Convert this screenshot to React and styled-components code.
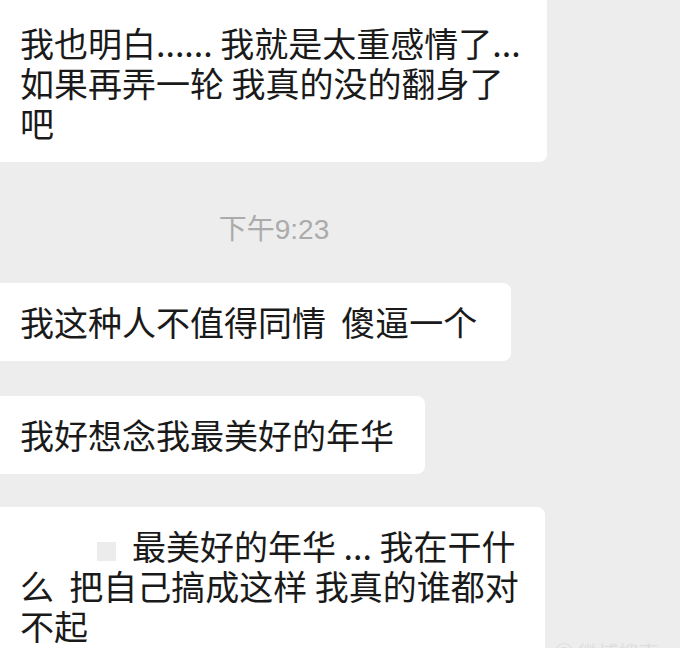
import React from "react"
import styled, { createGlobalStyle } from "styled-components"

const GlobalStyle = createGlobalStyle`
  html, body {
    margin: 0;
    padding: 0;
    background: #ededed;
    overflow: hidden;
  }
  body {
    font-family: "Noto Sans CJK SC", "Noto Sans", sans-serif;
  }
`

const Chat = styled.div`
  /* =-=-=-=-= Default =-=-=-=-= */
  position: relative;
  width: 680px;
  height: 648px;
  overflow: hidden;
  display: flex;
  flex-direction: column;
  align-items: flex-start;
  /* =-=-=-=-=-=-=-=-=-=-=-=-=-= */
`

const Bubble = styled.div`
  box-sizing: border-box;
  width: ${(p) => p.$w}px;
  margin-top: ${(p) => p.$gap}px;
  padding: ${(p) => (p.$first ? 23 : 19)}px 20px 19px 20px;
  background: #ffffff;
  border-radius: ${(p) => (p.$first ? "0 0 8px 0" : "0 8px 8px 0")};
  color: #1a1a1a;
  font-size: 34px;
  line-height: 40px;
  white-space: nowrap;
  flex-shrink: 0;
`

const Line = styled.div`
  display: block;
`

const Stamp = styled.div`
  width: 548px;
  margin-top: 49px;
  text-align: center;
  color: #ababab;
  font-family: "Liberation Sans", "Noto Sans CJK SC", sans-serif;
  font-size: 28px;
  line-height: 37px;
`

const Placeholder = styled.span`
  display: inline-block;
  width: 19px;
  height: 19px;
  margin: 0 16px 0 77px;
  background: #ececec;
  vertical-align: -1px;
`

const Watermark = styled.div`
  position: absolute;
  left: 554px;
  top: 641px;
  color: #dedede;
  font-size: 20px;
  line-height: 24px;
  white-space: nowrap;
`

const App = () => {
  return (
    <>
      <GlobalStyle />
      <Chat>
        <Bubble $first $w={547} $gap={0}>
          <Line>我也明白...... 我就是太重感情了...</Line>
          <Line>如果再弄一轮 我真的没的翻身了</Line>
          <Line>吧</Line>
        </Bubble>

        <Stamp>下午9:23</Stamp>

        <Bubble $w={511} $gap={35}>
          <Line>我这种人不值得同情&nbsp;&nbsp;傻逼一个</Line>
        </Bubble>

        <Bubble $w={425} $gap={35}>
          <Line>我好想念我最美好的年华</Line>
        </Bubble>

        <Bubble $w={545} $gap={33}>
          <Line>
            <Placeholder />
            最美好的年华 ... 我在干什
          </Line>
          <Line>么&nbsp;&nbsp;把自己搞成这样 我真的谁都对</Line>
          <Line>不起</Line>
        </Bubble>

        <Watermark>◎ 微博搜索</Watermark>
      </Chat>
    </>
  )
}

export default App
